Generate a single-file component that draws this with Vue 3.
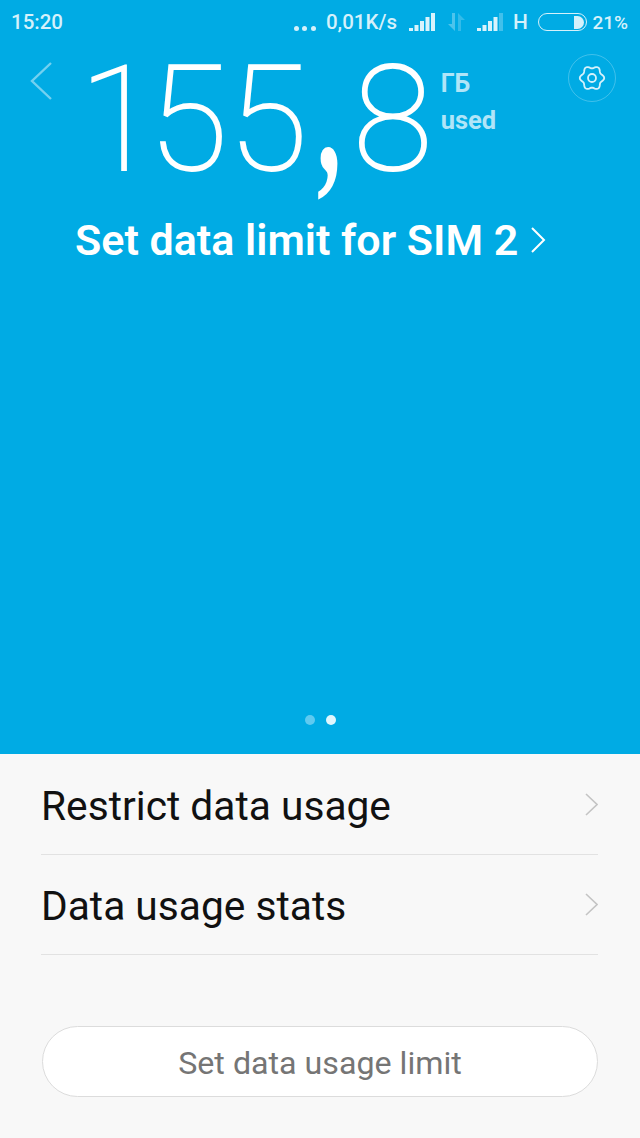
<script setup>
const rows = ['Restrict data usage', 'Data usage stats']
const bars = [
  { x: 0, h: 3 }, { x: 5.500, h: 6 }, { x: 11, h: 10 }, { x: 16.500, h: 14 }, { x: 22, h: 18 },
]

// six soft lobes of the settings icon
function flowerPath() {
  const pts = []
  for (let i = 0; i < 72; i++) {
    const t = (i / 72) * Math.PI * 2
    const r = 10.9 + 1.3 * Math.cos(6 * t)
    pts.push(`${(15 + r * Math.cos(t)).toFixed(2)} ${(15 + r * Math.sin(t)).toFixed(2)}`)
  }
  return 'M' + pts.join('L') + 'Z'
}
const flower = flowerPath()
</script>

<template>
  <div class="page">
    <section class="hero">
      <div class="status">
        <span class="time">15:20</span>
        <div class="status-right">
          <span class="dots"><i></i><i></i><i></i></span>
          <span class="speed">0,01K/s</span>
          <svg class="signal" width="27" height="19" viewBox="0 0 27 19">
            <rect v-for="b in bars" :key="b.x" :x="b.x" :y="19 - b.h" width="4" :height="b.h" fill="#d8f3fc" />
          </svg>
          <svg class="arrows" width="19" height="20" viewBox="0 0 19 20">
            <path d="M8 1v18L1 12h4V1z" fill="#fff" opacity=".3" />
            <path d="M11 19V1l7 7h-4v11z" fill="#fff" opacity=".2" />
          </svg>
          <svg class="signal second" width="29" height="19" viewBox="0 0 29 19">
            <rect v-for="(b, i) in bars" :key="b.x" :x="b.x" :y="19 - b.h" width="4" :height="b.h" fill="#d8f3fc" :opacity="i === 4 ? 0.3 : 1" />
          </svg>
          <span class="net">H</span>
          <span class="battery"><span class="level"></span></span>
          <span class="pct">21%</span>
        </div>
      </div>

      <div class="usage">
        <svg class="back" width="24" height="40" viewBox="0 0 24 40">
          <path d="M22 2 3 20l19 18" fill="none" stroke="#fff" stroke-opacity=".45" stroke-width="2.400" />
        </svg>
        <span class="amount"><span class="one">1</span>55<span class="comma">,</span>8</span>
        <div class="unit">
          <span class="gb">ГБ</span>
          <span class="used">used</span>
        </div>
        <button class="gear">
          <svg width="30" height="30" viewBox="0 0 30 30">
            <path :d="flower" fill="none" stroke="#d5f1fb" stroke-width="1.800" />
            <circle cx="15" cy="15" r="4" fill="none" stroke="#d5f1fb" stroke-width="1.800" />
          </svg>
        </button>
      </div>

      <div class="limit">
        <span>Set data limit for SIM 2</span>
        <svg width="16" height="28" viewBox="0 0 16 28">
          <path d="M2 2l12 12L2 26" fill="none" stroke="#fff" stroke-width="2" />
        </svg>
      </div>

      <div class="pager"><i></i><i class="on"></i></div>
    </section>

    <section class="list">
      <div v-for="row in rows" :key="row" class="row">
        <span>{{ row }}</span>
        <svg width="13" height="23" viewBox="0 0 13 23">
          <path d="M1 1 12 11.500 1 22" fill="none" stroke="#c4c4c4" stroke-width="1.600" />
        </svg>
      </div>
      <button class="set-limit">Set data usage limit</button>
    </section>
  </div>
</template>

<style>
html, body { margin: 0; background: #f8f8f8; }
</style>

<style scoped>
.page {
  width: 640px;
  height: 1138px;
  overflow: hidden;
  display: flex;
  flex-direction: column;
  font-family: Roboto, "Liberation Sans", sans-serif;
  background: #f8f8f8;
}

.hero {
  height: 754px;
  flex: none;
  display: flex;
  flex-direction: column;
  background: #00abe4;
  color: #fff;
}

.status {
  height: 44px;
  flex: none;
  padding: 0 12px 0 11px;
  display: flex;
  justify-content: space-between;
  align-items: center;
  color: #d5f1fb;
  font-size: 20.500px;
  font-weight: 500;
}

.status-right {
  display: flex;
  align-items: center;
}

.dots {
  display: flex;
  gap: 3.500px;
  margin-top: 12px;
}

.dots i {
  width: 5px;
  height: 5px;
  border-radius: 50%;
  background: #d5f1fb;
}

.speed { margin-left: 10px; }
.signal { margin-left: 12px; margin-top: -1px; }
.arrows { margin-left: 11px; }
.signal.second { margin-left: 11px; }
.net { margin-left: 7px; font-size: 21px; }

.battery {
  width: 49px;
  height: 18px;
  margin-left: 10px;
  box-sizing: border-box;
  border: 1.500px solid #d5f1fb;
  border-radius: 9px;
  display: flex;
  justify-content: flex-end;
  padding: 1.500px;
}

.level {
  width: 10px;
  background: #d5f1fb;
  border-radius: 0 7px 7px 0;
}

.pct { margin-left: 5.500px; font-size: 19px; }

.usage {
  height: 150px;
  flex: none;
  position: relative;
  display: flex;
  align-items: flex-start;
  padding-left: 29px;
}

.back {
  margin-top: 17px;
  flex: none;
}

.amount {
  margin-left: 26px;
  margin-top: 2px;
  font-size: 146px;
  line-height: 150px;
  font-weight: 100;
  color: #fff;
  -webkit-text-stroke: 1.800px #fff;
}

.one { letter-spacing: -11px; }

.comma {
  display: inline-block;
  font-family: "Liberation Serif", serif;
  font-weight: 700;
  font-size: 128px;
  -webkit-text-stroke: 0;
  margin: 0 8px 0 5px;
  transform: scale(0.75, 1.350);
  transform-origin: 50% 109px;
}

.unit {
  display: flex;
  flex-direction: column;
  margin-left: 8px;
  margin-top: 24px;
  font-weight: 700;
  color: #b0e5f8;
}

.gb { font-size: 25px; line-height: 32px; }
.used { font-size: 25.500px; line-height: 40px; }

.gear {
  position: absolute;
  top: 10px;
  right: 24px;
  width: 48px;
  height: 48px;
  padding: 0;
  display: flex;
  align-items: center;
  justify-content: center;
  background: none;
  border: 1px solid rgba(255, 255, 255, 0.25);
  border-radius: 50%;
}

.limit {
  margin-top: 21px;
  padding-left: 75px;
  display: flex;
  align-items: center;
  gap: 12px;
  font-size: 43px;
  line-height: 50px;
  font-weight: 600;
}

.pager {
  margin-top: auto;
  margin-bottom: 29px;
  display: flex;
  justify-content: center;
  gap: 11px;
}

.pager i {
  width: 10px;
  height: 10px;
  border-radius: 50%;
  background: #5fcaf0;
}

.pager i.on { background: #e0f6fd; }

.list {
  flex: 1;
  padding: 1px 42px 0 41px;
  display: flex;
  flex-direction: column;
}

.row {
  height: 100px;
  box-sizing: border-box;
  display: flex;
  align-items: center;
  justify-content: space-between;
  border-bottom: 1px solid #e2e2e2;
  font-size: 40.700px;
  color: #111;
}

.row span { position: relative; top: 1px; }

.set-limit {
  margin-top: 71px;
  margin-left: 1px;
  height: 71px;
  width: 556px;
  border: 1px solid #dcdcdc;
  border-radius: 36px;
  background: #fff;
  color: #757575;
  font-family: inherit;
  font-size: 32.200px;
  padding: 3px 0 0;
}
</style>
